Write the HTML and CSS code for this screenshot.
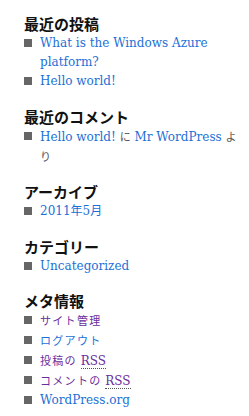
FILE: index.html
```html
<!DOCTYPE html>
<html lang="ja">
<head>
<meta charset="utf-8">
<link rel="stylesheet" href="styles.css">
</head>
<body>
<div class="sidebar">
  <section class="widget">
    <h3 class="widget-title">最近の投稿</h3>
    <ul class="list">
      <li><a class="link" href="#">What is the Windows Azure platform?</a></li>
      <li><a class="link" href="#">Hello world!</a></li>
    </ul>
  </section>
  <section class="widget">
    <h3 class="widget-title">最近のコメント</h3>
    <ul class="list">
      <li><a class="link" href="#">Hello world!</a> <span class="jp">に</span> <a class="link" href="#">Mr WordPress</a> <span class="jp">よ</span><span class="jp">り</span></li>
    </ul>
  </section>
  <section class="widget">
    <h3 class="widget-title">アーカイブ</h3>
    <ul class="list">
      <li><a class="link" href="#">2011年5月</a></li>
    </ul>
  </section>
  <section class="widget">
    <h3 class="widget-title">カテゴリー</h3>
    <ul class="list">
      <li><a class="link" href="#">Uncategorized</a></li>
    </ul>
  </section>
  <section class="widget">
    <h3 class="widget-title">メタ情報</h3>
    <ul class="list">
      <li><a class="link visited jp-link" href="#">サイト管理</a></li>
      <li><a class="link jp-link" href="#">ログアウト</a></li>
      <li><a class="link visited" href="#"><span class="jp-link">投稿の</span> <abbr class="abbr">RSS</abbr></a></li>
      <li><a class="link visited" href="#"><span class="jp-link">コメントの</span> <abbr class="abbr">RSS</abbr></a></li>
      <li><a class="link" href="#">WordPress.org</a></li>
    </ul>
  </section>
</div>
</body>
</html>
```

FILE: styles.css
```css
html, body {
  margin: 0;
  padding: 0;
  background: #fff;
}
.sidebar {
  padding: 14px 0 0 24px;
  width: 241px;
  box-sizing: border-box;
  font-family: "DejaVu Serif", "Noto Sans CJK JP", serif;
  font-size: 12px;
  color: #333;
}
.widget {
  margin-bottom: 15.5px;
}
.widget-title {
  margin: 0;
  font-family: "Noto Sans CJK JP", sans-serif;
  font-size: 15px;
  font-weight: bold;
  line-height: 20px;
  height: 20px;
  color: #111;
}
.list {
  list-style: none;
  margin: 0;
  padding: 0;
}
.list li {
  position: relative;
  padding-left: 16px;
  line-height: 19px;
}
.list li::before {
  content: "";
  position: absolute;
  left: 0;
  top: 5px;
  width: 8px;
  height: 8px;
  background: #666;
}
.link {
  color: #1b6fd6;
  text-decoration: none;
}
.link.visited {
  color: #6b2d9c;
}
.jp, .jp-link {
  font-family: "Noto Sans CJK JP", sans-serif;
  font-size: 11px;
  line-height: 19px;
}
.jp {
  color: #555;
}
.jp-link {
  letter-spacing: 1.3px;
}
.abbr {
  text-decoration: none;
  border-bottom: 1px dotted #555;
}
```
